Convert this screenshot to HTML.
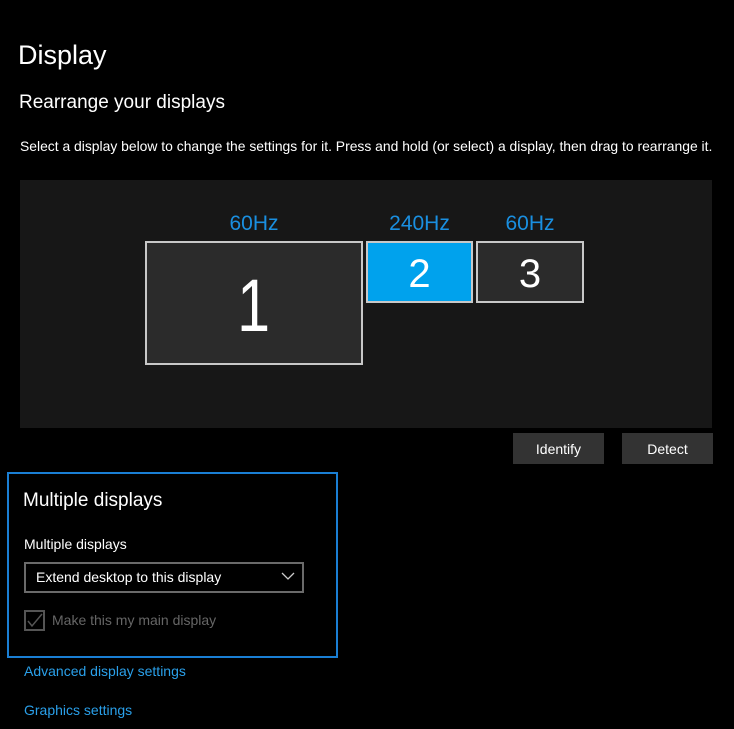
<!DOCTYPE html>
<html><head><style>
body{margin:0;width:734px;height:729px;background:#000;font-family:"Liberation Sans",sans-serif;color:#fff;position:relative;overflow:hidden}
.a{position:absolute;white-space:nowrap}
.mon{position:absolute;box-sizing:border-box;border:2px solid #c8c8c8;background:#2b2b2b;color:#fff;display:flex;align-items:center;justify-content:center;font-weight:300}
.hz{position:absolute;color:#1a8fe0;font-size:21px;text-align:center}
.btn{position:absolute;background:#333;color:#fff;font-size:14px;display:flex;align-items:center;justify-content:center}
.lnk{color:#2aa0ea;font-size:14px}
</style></head><body>
<div class="a" style="left:18px;top:40px;font-size:27px">Display</div>
<div class="a" style="left:19px;top:92px;font-size:19px">Rearrange your displays</div>
<div class="a" style="left:20px;top:138px;font-size:13.9px">Select a display below to change the settings for it. Press and hold (or select) a display, then drag to rearrange it.</div>
<div class="a" style="left:20px;top:180px;width:692px;height:248px;background:#171717"></div>
<div class="hz" style="left:145px;top:212px;width:218px">60Hz</div>
<div class="hz" style="left:366px;top:212px;width:107px">240Hz</div>
<div class="hz" style="left:476px;top:212px;width:108px">60Hz</div>
<div class="mon" style="left:145px;top:241px;width:218px;height:124px;font-size:74px;padding-top:4px"><span style="display:inline-block;transform:scaleX(0.8)">1</span></div>
<div class="mon" style="left:366px;top:241px;width:107px;height:62px;font-size:40px;background:#00a2ed;padding-top:4px">2</div>
<div class="mon" style="left:476px;top:241px;width:108px;height:62px;font-size:40px;padding-top:4px">3</div>
<div class="btn" style="left:513px;top:433px;width:91px;height:31px">Identify</div>
<div class="btn" style="left:622px;top:433px;width:91px;height:31px">Detect</div>
<div class="a" style="left:7px;top:472px;width:331px;height:186px;box-sizing:border-box;border:2px solid #1a7fd4"></div>
<div class="a" style="left:23px;top:490px;font-size:19px">Multiple displays</div>
<div class="a" style="left:24px;top:536px;font-size:14px">Multiple displays</div>
<div class="a" style="left:24px;top:562px;width:280px;height:31px;box-sizing:border-box;border:2px solid #6a6a6a"></div>
<div class="a" style="left:36px;top:569px;font-size:14px">Extend desktop to this display</div>
<svg class="a" style="left:281px;top:571px" width="14" height="10"><path d="M1 2l6 6 6-6" fill="none" stroke="#ccc" stroke-width="1.3"/></svg>
<svg class="a" style="left:24px;top:610px" width="21" height="21"><rect x="1" y="1" width="19" height="19" fill="none" stroke="#555" stroke-width="2"/><path d="M4 11l4 5 10-12" fill="none" stroke="#555" stroke-width="1.5"/></svg>
<div class="a" style="left:52px;top:612px;font-size:14px;color:#666">Make this my main display</div>
<div class="a lnk" style="left:24px;top:663px">Advanced display settings</div>
<div class="a lnk" style="left:24px;top:702px">Graphics settings</div>
</body></html>
